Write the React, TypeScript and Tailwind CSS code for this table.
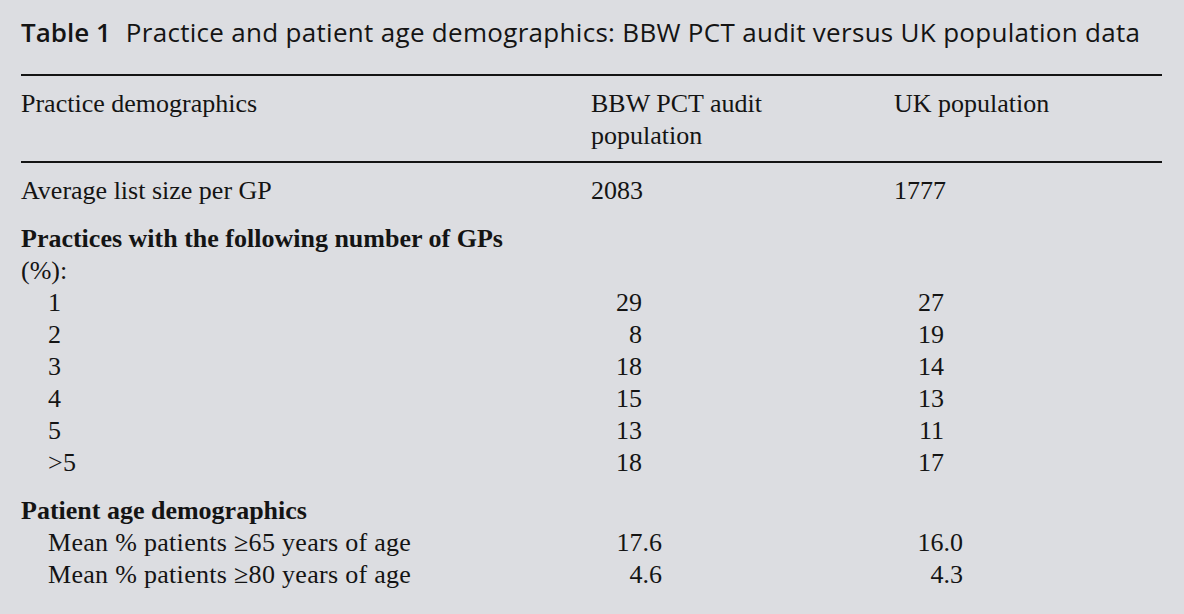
const serif = "font-['Liberation_Serif',serif] text-[26px] leading-8";

type Row = { label: string; a: string; b: string; dec?: boolean };

const gpRows: Row[] = [
  { label: "1", a: "29", b: "27" },
  { label: "2", a: "8", b: "19" },
  { label: "3", a: "18", b: "14" },
  { label: "4", a: "15", b: "13" },
  { label: "5", a: "13", b: "11" },
  { label: ">5", a: "18", b: "17" },
];

const ageRows: Row[] = [
  { label: "Mean % patients \u226565 years of age", a: "17.6", b: "16.0", dec: true },
  { label: "Mean % patients \u226580 years of age", a: "4.6", b: "4.3", dec: true },
];

function DataRow({ row }: { row: Row }) {
  return (
    <div className="grid grid-cols-[570px_303px_1fr]">
      <div className="pl-[27px] tracking-[0.3px]">{row.label}</div>
      <div className={row.dec ? "w-[71px] text-right" : "w-[51px] text-right"}>{row.a}</div>
      <div className={row.dec ? "w-[69px] text-right" : "w-[50px] text-right"}>{row.b}</div>
    </div>
  );
}

export default function App() {
  return (
    <div className="w-[1184px] h-[614px] bg-[#dcdde1] pl-[21px] pr-[22px] pt-4 text-[#141414]">
      <h1 className="font-['Open_Sans',sans-serif] text-[26px] leading-8 whitespace-nowrap">
        <span className="font-semibold mr-[15px]">Table 1</span>
        <span className="tracking-[0.3px]">
          Practice and patient age demographics: BBW PCT audit versus UK population data
        </span>
      </h1>

      <div className={`mt-[26px] border-t-2 border-[#141414] ${serif}`}>
        {/* Header */}
        <div className="grid grid-cols-[570px_303px_1fr] pt-3 pb-[9px]">
          <div>Practice demographics</div>
          <div>
            BBW PCT audit
            <br />
            population
          </div>
          <div>UK population</div>
        </div>

        {/* Body */}
        <div className="border-t-2 border-[#141414] pt-3">
          <div className="grid grid-cols-[570px_303px_1fr]">
            <div>Average list size per GP</div>
            <div>2083</div>
            <div>1777</div>
          </div>

          <div className="mt-4">
            <div className="font-bold">Practices with the following number of GPs</div>
            <div>(%):</div>
            {gpRows.map((r) => (
              <DataRow key={r.label} row={r} />
            ))}
          </div>

          <div className="mt-4">
            <div className="font-bold">Patient age demographics</div>
            {ageRows.map((r) => (
              <DataRow key={r.label} row={r} />
            ))}
          </div>
        </div>
      </div>
    </div>
  );
}
